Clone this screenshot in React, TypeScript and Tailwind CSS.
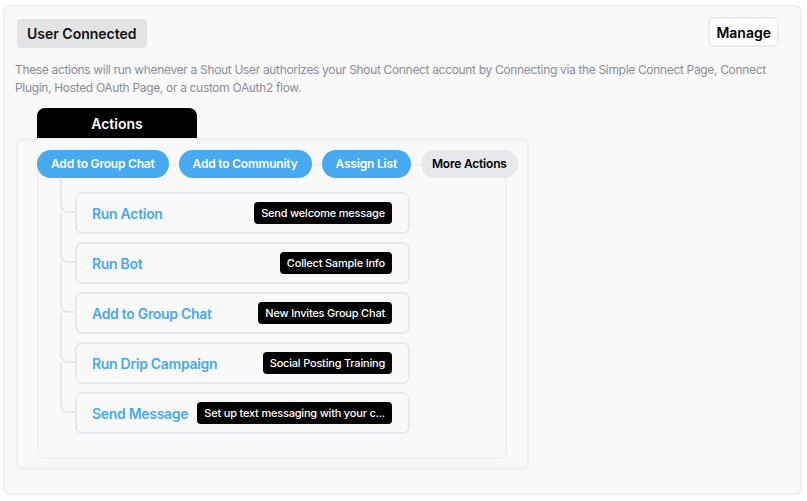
import * as React from "react";

type StepType = {
  title: string;
  detail: string;
};

const steps: StepType[] = [
  { title: "Run Action", detail: "Send welcome message" },
  { title: "Run Bot", detail: "Collect Sample Info" },
  { title: "Add to Group Chat", detail: "New Invites Group Chat" },
  { title: "Run Drip Campaign", detail: "Social Posting Training" },
  { title: "Send Message", detail: "Set up text messaging with your c..." },
];

const quickActions = ["Add to Group Chat", "Add to Community", "Assign List"];

const StepRow = ({ step, first }: { step: StepType; first: boolean }) => {
  return (
    <div className="flex">
      {/* tree connector */}
      <div
        className={`w-[15px] shrink-0 border-l-2 border-b-2 border-[#e6e6eb] rounded-bl-[8px] ${
          first ? "-mt-[15px] h-[36px]" : "-mt-[29px] h-[50px]"
        }`}
      ></div>
      <div className="flex items-center justify-between gap-1 w-[335px] h-[42px] pl-[15px] pr-[16px] bg-[#f9f9fa] border-2 border-[#e8e8ee] rounded-[7px]">
        <span className="text-[14px] font-semibold text-[#47a9ef] whitespace-nowrap tracking-[-0.3px]">
          {step.title}
        </span>
        <span className="whitespace-nowrap bg-black text-white text-[11px] font-medium leading-[22px] px-[7px] rounded-[4px] tracking-[-0.2px]">
          {step.detail}
        </span>
      </div>
    </div>
  );
};

export default function App() {
  return (
    <div
      className="w-[807px] h-[501px] bg-white pt-[5px] pl-[3px] pr-[5px]"
      style={{ fontFamily: "Inter, 'Noto Sans', sans-serif" }}
    >
      <div className="h-[490px] bg-[#f9f9fa] border-2 border-[#f0f0f2] rounded-[7px] pt-[12px] pl-[11px] pr-[21px]">
        <div className="flex items-start justify-between">
          <div className="ml-[1px] h-[29px] px-[10px] flex items-center bg-[#e3e3e5] rounded-[4px] text-[14px] font-semibold text-[#111]">
            User Connected
          </div>
          <button className="-mt-[2px] h-[30px] px-[6px] bg-white border-2 border-[#ececef] rounded-[5px] text-[14px] font-semibold text-black">
            Manage
          </button>
        </div>
        <p className="mt-[13px] -ml-[1px] text-[12px] leading-[18px] text-[#8c8c99] tracking-[-0.33px] whitespace-nowrap">
          These actions will run whenever a Shout User authorizes your Shout Connect account by Connecting via the Simple Connect Page, Connect
          <br />
          Plugin, Hosted OAuth Page, or a custom OAuth2 flow.
        </p>

        <div className="mt-[11px] ml-[21px] w-[160px] h-[30px] flex items-center justify-center bg-black text-white text-[14px] font-semibold rounded-t-[8px]">
          Actions
        </div>

        <div className="w-[513px] h-[332px] border-2 border-[#f0f0f2] rounded-[7px] pt-[10px] pl-[19px]">
          <div className="relative z-10 flex gap-[10px]">
            {quickActions.map((a) => (
              <button
                key={a}
                className="shrink-0 whitespace-nowrap h-[28px] px-[14px] rounded-full bg-[#47a9ef] text-white text-[12px] font-semibold tracking-[-0.2px]"
              >
                {a}
              </button>
            ))}
            <button className="shrink-0 whitespace-nowrap h-[28px] px-[11px] rounded-full bg-[#e8e8ec] text-black text-[12px] font-semibold tracking-[-0.2px]">
              More Actions
            </button>
          </div>
          <div className="-mt-[14px] w-[470px] h-[295px] border-2 border-[#f0f0f2] rounded-[7px] pt-[26px] pl-[21px]">
            <div className="flex flex-col gap-[8px]">
              {steps.map((s, i) => (
                <StepRow key={i} step={s} first={i === 0} />
              ))}
            </div>
          </div>
        </div>
      </div>
    </div>
  );
}
